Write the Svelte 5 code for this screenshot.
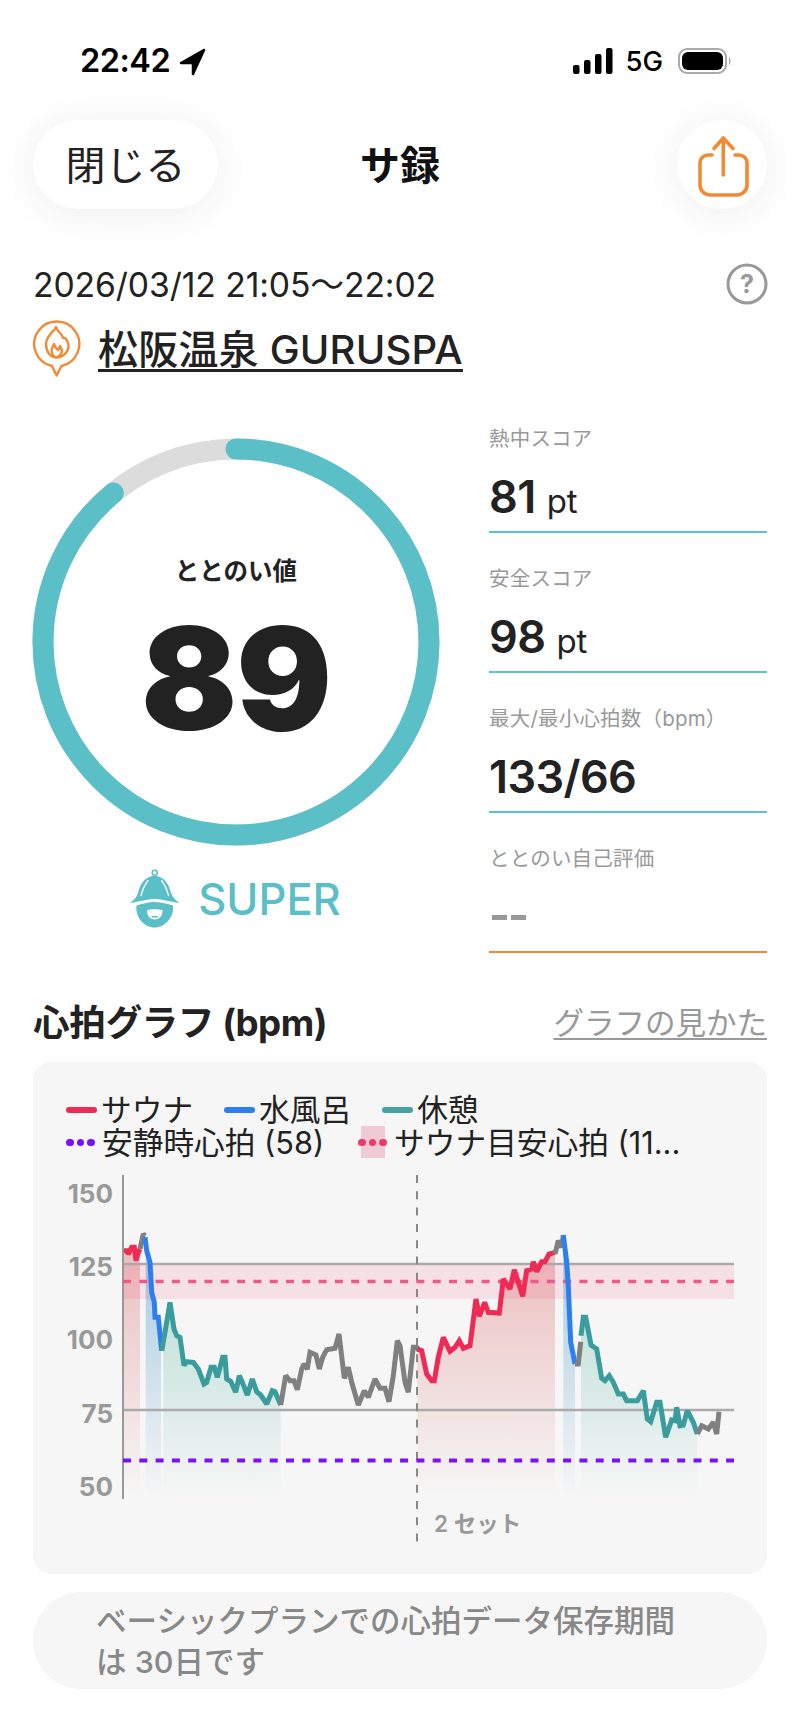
<script>
  const a = (list) => list.map(([x, y]) => [100 + x / 3, 1220 + y / 3]);
  const b = (list) => list.map(([x, y]) => [400 + x / 3, 1220 + y / 3]);
  const C = { red: '#ee2a55', blue: '#2b7ff0', teal: '#3a9c9c', gray: '#808080' };

  const red1 = a([[72,95],[80,95],[85,105],[95,85],[103,85],[108,125],[115,100],[120,90]]);
  const gray1 = a([[120,90],[130,45],[135,50]]);
  const blue1 = a([[135,55],[140,95],[150,130],[155,220],[163,250],[165,295],[175,295],[185,395]]);
  const teal1 = a([[185,395],[195,340],[210,250],[222,330],[230,350],[240,355],[252,440],[258,428],[280,430],[295,450],[312,495],[320,490],[333,445],[343,445],[352,475],[368,415],[375,415],[380,480],[392,487],[407,520],[418,470],[425,485],[442,528],[457,480],[470,518],[482,528],[500,555],[517,515],[525,518],[542,558]]);
  const gray2 = a([[542,558],[557,470],[570,485],[582,485],[592,512],[605,450],[612,435],[622,450],[630,400],[648,408],[658,450],[668,415],[680,392],[705,388],[717,345],[733,478],[745,445],[755,490],[775,558],[793,515],[805,535],[825,480],[840,508],[855,508],[867,548],[880,470],[892,365],[900,380],[915,490],[925,520],[940,385],[950,385],[958,395]]);
  const red2 = b([[52,390],[65,395],[80,465],[95,485],[103,485],[115,415],[130,355],[150,397],[165,385],[178,365],[190,388],[210,380],[228,240],[238,292],[254,250],[265,280],[298,282],[310,180],[330,210],[343,152],[368,232],[380,155],[395,150],[400,128],[410,158],[425,128],[435,128],[447,105],[465,100]]);
  const gray3 = b([[465,105],[475,65],[485,85],[490,50]]);
  const blue2 = b([[490,48],[500,130],[505,200],[512,370],[525,435]]);
  const gray4 = b([[525,435],[535,435],[542,368]]);
  const teal2 = b([[543,350],[550,295],[557,295],[573,378],[590,390],[605,478],[615,485],[628,470],[640,490],[655,525],[670,525],[680,545],[695,545],[712,545],[730,515],[742,600],[752,608],[770,550],[780,550],[797,655],[815,603],[825,605],[830,565],[840,620],[850,618],[862,575],[880,610],[892,645]]);
  const gray5 = b([[892,645],[905,620],[915,625],[925,630],[940,610],[950,645],[957,578]]);

  const lines = [
    [red1, C.red], [gray1, C.gray], [blue1, C.blue], [teal1, C.teal], [gray2, C.gray],
    [red2, C.red], [gray3, C.gray], [blue2, C.blue], [gray4, C.gray], [teal2, C.teal], [gray5, C.gray]
  ];
  const base = 1498;
  const areas = [
    { pts: red1, x0: 124, x1: 140.7, fill: 'url(#gr)' },
    { pts: blue1, x0: 145.7, x1: 161, fill: 'url(#gb)' },
    { pts: teal1, x0: 163.3, x1: 282.7, fill: 'url(#gt)' },
    { pts: red2, x0: 417, x1: 556, fill: 'url(#gr)' },
    { pts: blue2, x0: 562, x1: 576.7, fill: 'url(#gb)' },
    { pts: teal2, x0: 581, x1: 699, fill: 'url(#gt)' }
  ];
  const str = (p) => p.map(([x, y]) => `${x.toFixed(1)},${y.toFixed(1)}`).join(' ');
  const poly = (p) => str([...p, [p[p.length - 1][0], base], [p[0][0], base]]);
  const ticks = [[150, 1193], [125, 1266], [100, 1339], [75, 1413], [50, 1486]];
  const stats = [
    { label: '熱中スコア', value: '81', unit: 'pt' },
    { label: '安全スコア', value: '98', unit: 'pt' },
    { label: '最大/最小心拍数（bpm）', value: '133/66', unit: '' }
  ];
  const R = 193;
  const circ = 2 * Math.PI * R;
</script>

<div class="page">
  <div class="status">
    <div class="time">22:42
      <svg class="loc" width="27" height="28" viewBox="0 0 27 28"><path d="M25 2 L2 15 L14 15 L14 26 Z" fill="#000" stroke="#000" stroke-width="2.5" stroke-linejoin="round"/></svg>
    </div>
    <div class="sys">
      <svg width="40" height="26" viewBox="0 0 40 26"><rect x="0" y="17" width="6.5" height="9" rx="2"/><rect x="11" y="12" width="6.5" height="14" rx="2"/><rect x="22" y="6" width="6.5" height="20" rx="2"/><rect x="33" y="0" width="6.5" height="26" rx="2"/></svg>
      <span class="net">5G</span>
      <svg width="54" height="26" viewBox="0 0 54 26"><rect x="1" y="1" width="47" height="24" rx="8" fill="none" stroke="#aaa" stroke-width="2"/><rect x="4" y="4" width="41" height="18" rx="6" fill="#000"/><path d="M51 9 C53 10 53 16 51 17 Z" fill="#aaa"/></svg>
    </div>
  </div>

  <div class="nav">
    <div class="left"><button class="close">閉じる</button></div>
    <div class="title">サ録</div>
    <div class="right">
      <button class="share" aria-label="share">
        <svg width="88" height="89" viewBox="0 0 88 89" fill="none" stroke="#f08a34" stroke-width="3.6" stroke-linecap="round" stroke-linejoin="round">
          <path d="M33 35 H29 a8 8 0 0 0 -8 8 V65 a10 10 0 0 0 10 10 H58 a10 10 0 0 0 10 -10 V43 a8 8 0 0 0 -8 -8 H56"/>
          <path d="M44.3 55 V18 M35 28.5 L44.3 18 L54 28.5"/>
        </svg>
      </button>
    </div>
  </div>

  <div class="date-row">
    <span class="date">2026/03/12 21:05～22:02</span>
    <svg class="help" width="42" height="42" viewBox="0 0 42 42"><circle cx="21" cy="21" r="19" fill="none" stroke="#999" stroke-width="3"/><text x="21" y="30" text-anchor="middle" class="q">?</text></svg>
  </div>

  <div class="place-row">
    <svg class="pin" width="50" height="60" viewBox="0 0 50 60" fill="none" stroke="#f08a34" stroke-width="2.4" stroke-linejoin="round" stroke-linecap="round">
      <path d="M20 48 A22.5 22.5 0 1 1 29.5 48 L24.7 57.5 Z"/>
      <path d="M24 9 C25 14 30 15 31 20 C33 19 36.5 23 36.5 28 C36.5 35 30 39.5 24 39.5 C18 39.5 14 33 14 26 C14 20 18 17 20 14 C22 12 24 11 24 9 Z"/>
      <path d="M23 39 C18 35 19 31 22 26 C23 30 25 31 26 32 C27 31 28 30 28 28 C31 32 30 36 26 39"/>
    </svg>
    <span class="place">松阪温泉 GURUSPA</span>
  </div>

  <div class="main">
    <div class="gauge-col">
      <div class="gauge">
        <svg width="406" height="406" viewBox="0 0 406 406" fill="none">
          <circle cx="203" cy="203" r={R} stroke="#dcdcdc" stroke-width="21"/>
          <circle cx="203" cy="203" r={R} stroke="#5bbfc7" stroke-width="21" stroke-linecap="round"
            stroke-dasharray="{circ * 0.89} {circ}" transform="rotate(-90 203 203)"/>
        </svg>
        <div class="gauge-text">
          <div class="g-label">ととのい値</div>
          <div class="g-value">89</div>
        </div>
      </div>
      <div class="super">
        <svg width="50" height="60" viewBox="0 0 50 60" fill="#5bbfc7">
          <circle cx="24.7" cy="3.7" r="2.5" fill="none" stroke="#5bbfc7" stroke-width="1.6"/>
          <path d="M24.7 6.5 C15 7.5 10 15 8 24 C6.5 29 3 31.5 0 34 C10 32.5 18 30 24.7 30 C31 30 39 32.5 49.5 34 C46 31.5 43 29 41 24 C39 15 34 7.5 24.7 6.5 Z"/>
          <path d="M18 11.5 C14.5 16 12.5 21 11 26.5 M31.5 11.5 C35 16 37 21 38.5 26.5" fill="none" stroke="#fff" stroke-width="1.3" stroke-linecap="round"/>
          <path d="M6.5 36.5 C14 34.5 19 33 24.7 33 C30 33 36 34.5 43 36.5 C44.5 48 35 58.5 24.7 58.5 C14 58.5 5 48 6.5 36.5 Z"/>
          <path d="M17 41 C21 40 28 40 32.5 41 C33 46 29.5 50.5 24.7 50.5 C20 50.5 16.5 46 17 41 Z" fill="#fff"/>
          <rect x="21.5" y="47" width="6.5" height="1.6" rx="0.8"/>
        </svg>
        <span>SUPER</span>
      </div>
    </div>

    <div class="stats">
      {#each stats as s}
        <div class="stat">
          <div class="s-label">{s.label}</div>
          <div class="s-value">{s.value}{#if s.unit}<span class="s-unit">{s.unit}</span>{/if}</div>
        </div>
      {/each}
      <div class="stat self">
        <div class="s-label">ととのい自己評価</div>
        <div class="s-value empty"><i></i><i></i></div>
      </div>
    </div>
  </div>

  <div class="head">
    <h2>心拍グラフ (bpm)</h2>
    <span class="link">グラフの見かた</span>
  </div>

  <div class="card">
    <div class="legend">
      <div class="l-row">
        <span class="item"><i class="swatch sred"></i>サウナ</span>
        <span class="item"><i class="swatch sblue"></i>水風呂</span>
        <span class="item"><i class="swatch steal"></i>休憩</span>
      </div>
      <div class="l-row">
        <span class="item"><span class="dots purple"><i></i><i></i><i></i></span>安静時心拍 (58)</span>
        <span class="item"><span class="dots pink"><b></b><i></i><i></i><i></i></span>サウナ目安心拍 (11...</span>
      </div>
    </div>
    <svg class="plot" width="734" height="414" viewBox="33 1160 734 414" fill="none">
      <defs>
        <linearGradient id="gr" gradientUnits="userSpaceOnUse" x1="0" y1="1240" x2="0" y2="1498">
          <stop offset="0" stop-color="#d85a5a" stop-opacity=".37"/><stop offset="1" stop-color="#d85a5a" stop-opacity="0"/>
        </linearGradient>
        <linearGradient id="gb" gradientUnits="userSpaceOnUse" x1="0" y1="1240" x2="0" y2="1498">
          <stop offset="0" stop-color="#4f9bcb" stop-opacity=".5"/><stop offset="1" stop-color="#4f9bcb" stop-opacity="0"/>
        </linearGradient>
        <linearGradient id="gt" gradientUnits="userSpaceOnUse" x1="0" y1="1300" x2="0" y2="1498">
          <stop offset="0" stop-color="#5cb8a4" stop-opacity=".36"/><stop offset="1" stop-color="#5cb8a4" stop-opacity="0"/>
        </linearGradient>
        {#each areas as ar, i}
          <clipPath id="c{i}"><rect x={ar.x0} y="1160" width={ar.x1 - ar.x0} height="400"/></clipPath>
        {/each}
      </defs>

      {#each areas as ar, i}
        <polygon points={poly(ar.pts)} fill={ar.fill} clip-path="url(#c{i})"/>
      {/each}

      <rect x="123" y="1265" width="611" height="35" fill="#f0325f" fill-opacity=".11"/>
      <path d="M123 1265H734M123 1411H734" stroke="#aaa" stroke-width="2.4"/>
      <path d="M123 1176V1500" stroke="#999" stroke-width="2"/>
      <path d="M417 1176V1543" stroke="#888" stroke-width="2" stroke-dasharray="8 8.3"/>
      <path d="M123 1282.5H734" stroke="#ee5a88" stroke-width="3.6" stroke-dasharray="8 8.3"/>
      <path d="M123 1461.5H734" stroke="#7a10f7" stroke-width="3.8" stroke-dasharray="8 8.3"/>

      {#each lines as [pts, col]}
        <polyline points={str(pts)} stroke={col} stroke-width="5" stroke-linejoin="miter" stroke-miterlimit="2"/>
      {/each}

      {#each ticks as [t, y]}
        <text x="113" y={y + 10.5} text-anchor="end" class="tick">{t}</text>
      {/each}
      <text x="434" y="1533" class="set">2 セット</text>
    </svg>
  </div>

  <div class="notice">ベーシックプランでの心拍データ保存期間<br/>は 30日です</div>
</div>

<style>
  :global(body) { margin: 0; background: #fff; }
  .page {
    width: 800px; height: 1734px; overflow: hidden; background: #fff; color: #222;
    font-family: Inter, "Noto Sans CJK JP", sans-serif;
  }
  .status {
    height: 120px; box-sizing: border-box; padding: 44px 68px 0 80px;
    display: flex; justify-content: space-between; align-items: flex-start; color: #000;
  }
  .time { font-size: 32.5px; font-weight: 600; line-height: 34px; display: flex; align-items: center; gap: 9px; letter-spacing: -0.5px; }
  .loc { margin-top: 2px; }
  .sys { display: flex; align-items: center; gap: 12px; height: 34px; margin-left: auto; }
  .sys svg:first-child { fill: #000; }
  .net { font-size: 27.5px; font-weight: 500; line-height: 34px; margin-right: 3px; }

  .nav { height: 89px; padding: 0 33px; display: grid; grid-template-columns: 1fr auto 1fr; align-items: center; }
  .left { display: flex; }
  .right { display: flex; justify-content: flex-end; }
  button { border: 0; background: #fff; padding: 0; font-family: inherit; color: #222; box-shadow: 0 4px 40px rgba(0,0,0,.07); }
  .close { width: 185px; height: 89px; border-radius: 45px; font-size: 40px; padding-bottom: 4px; }
  .title { font-size: 40px; font-weight: 700; color: #111; padding-bottom: 4px; }
  .share { width: 90px; height: 89px; border-radius: 50%; display: flex; justify-content: flex-end; }
  .share svg { display: block; }

  .date-row { margin-top: 52px; padding: 0 32px 0 33px; height: 42px; display: flex; justify-content: space-between; align-items: center; }
  .date { font-size: 33.7px; letter-spacing: -0.1px; }
  .help { margin-top: 4px; }
  .q { font: 700 25px Inter, sans-serif; fill: #999; }

  .place-row { margin-top: 16px; padding-left: 33px; height: 60px; display: flex; align-items: flex-start; gap: 15px; }
  .pin { margin: -1px 0 0 -1px; }
  .place { font-size: 40px; font-weight: 500; line-height: 50px; margin: 6px 0 0 1px; letter-spacing: 0.2px; text-decoration: underline; text-decoration-thickness: 3px; text-underline-offset: 5px; }

  .main { display: flex; padding-left: 33px; height: 619px; }
  .gauge-col { width: 406px; padding-top: 60px; }
  .gauge { position: relative; width: 406px; height: 406px; }
  .gauge svg { display: block; overflow: visible; }
  .gauge-text { position: absolute; inset: 0; display: flex; flex-direction: column; align-items: center; }
  .g-label { margin-top: 114px; font-size: 24.5px; line-height: 36px; font-weight: 600; }
  .g-value { font-size: 142px; font-weight: 900; line-height: 150px; margin-top: 14px; letter-spacing: -1px; }
  .super { margin-top: 24px; display: flex; align-items: center; justify-content: center; gap: 18px; padding-left: 5px; color: #5bbfc7; font-size: 43.5px; font-weight: 500; height: 60px; }
  .super svg { margin-left: -6px; }

  .stats { margin-left: 50px; width: 278px; padding-top: 45px; }
  .stat { height: 109px; margin-bottom: 31px; box-sizing: border-box; border-bottom: 2px solid #5bc4c9; display: flex; flex-direction: column; }
  .stat.self { border-bottom-color: #f08a34; }
  .s-label { font-size: 20.5px; line-height: 30px; color: #999; white-space: nowrap; letter-spacing: 0.2px; }
  .s-value { font-size: 45px; font-weight: 600; line-height: 60px; margin-top: 13px; letter-spacing: -0.6px; }
  .s-unit { font-size: 33px; font-weight: 400; margin-left: 11px; letter-spacing: 0; }
  .s-value.empty { display: flex; align-items: center; gap: 4px; padding-left: 3px; height: 60px; }
  .s-value.empty i { width: 15px; height: 5px; background: #999; display: block; }

  .head { padding: 0 33px; height: 64px; display: flex; justify-content: space-between; align-items: flex-start; }
  h2 { margin: 0; font-size: 36.7px; font-weight: 700; line-height: 50px; letter-spacing: -0.5px; }
  .link { font-size: 30.5px; line-height: 50px; color: #999; text-decoration: underline; text-decoration-thickness: 2px; text-underline-offset: 4px; }

  .card { width: 734px; height: 512px; margin-left: 33px; background: #f6f6f6; border-radius: 18px; overflow: hidden; }
  .legend { height: 97px; box-sizing: border-box; padding: 31px 0 0 33px; font-size: 30.7px; line-height: 33px; color: #222; }
  .l-row { display: flex; gap: 31px; white-space: nowrap; height: 33px; }
  .l-row:last-child .item + .item { margin-left: 3px; }
  .item { display: flex; align-items: center; }
  .swatch { width: 31px; height: 6px; border-radius: 3px; margin-right: 4px; display: block; }
  .sred { background: #ee2a55; } .sblue { background: #2b7ff0; } .steal { background: #46a3a3; }
  .dots { position: relative; display: flex; gap: 3px; width: 29px; margin-right: 7px; justify-content: center; }
  .dots i { position: relative; width: 7.5px; height: 7.5px; border-radius: 50%; display: block; flex: none; }
  .purple i { background: #7a10f7; }
  .pink i { background: #ee3a6a; }
  .dots b { position: absolute; left: 3px; top: -12.5px; width: 24px; height: 32px; background: #f0cbd6; }
  .plot { display: block; }
  .tick { font: 700 26px Inter, sans-serif; fill: #999; }
  .set { font: 600 22.5px Inter, "Noto Sans CJK JP", sans-serif; fill: #999; }

  .notice { margin: 18px 33px 0; height: 97px; box-sizing: border-box; padding: 8px 63px 0; border-radius: 48px; background: #f6f6f6; color: #888; font-size: 30.5px; font-weight: 500; line-height: 41px; }
</style>
